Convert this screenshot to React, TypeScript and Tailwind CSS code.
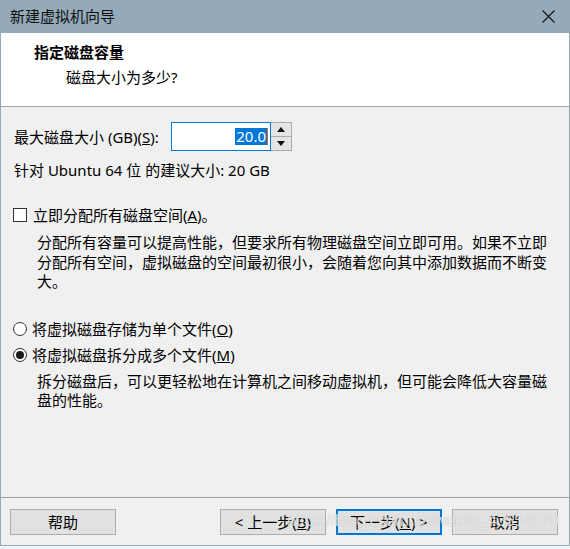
import React from 'react'

const font = "font-['Noto_Sans','Noto_Sans_CJK_SC',sans-serif]"

function Checkbox() {
  return <span className="block w-[14px] h-[14px] border border-[#333333] bg-white shrink-0" />
}

function Radio({ checked }: { checked?: boolean }) {
  return (
    <span className="flex items-center justify-center w-[14px] h-[14px] rounded-full border border-[#333333] bg-white shrink-0">
      {checked && <span className="block w-[8px] h-[8px] rounded-full bg-[#1a1a1a]" />}
    </span>
  )
}

function Button({ children, focused }: { children: React.ReactNode; focused?: boolean }) {
  return (
    <button
      className={
        'w-[106px] h-[26px] flex items-center justify-center bg-[#e1e1e1] text-[15px] leading-none text-black ' +
        (focused ? 'border-2 border-[#0078d7]' : 'border border-[#adadad]')
      }
    >
      {children}
    </button>
  )
}

export default function App() {
  return (
    <div className={`relative w-[570px] h-[549px] bg-[#f4f4f4] text-black ${font}`}>
      <div className="h-[546px] flex flex-col border-x border-b border-[#94aab8]">
        {/* Title bar */}
        <div className="h-[33px] -mx-px bg-[#94aab8] flex items-center justify-between pl-[10px] pr-[15px]">
          <span className="text-[15px] leading-none text-[#111]">新建虚拟机向导</span>
          <svg width="13" height="13" viewBox="0 0 13 13" className="text-[#111]">
            <path d="M0.5 0.5 L12.5 12.5 M12.5 0.5 L0.5 12.5" stroke="currentColor" strokeWidth="1.1" fill="none" />
          </svg>
        </div>

        {/* Header */}
        <div className="h-[74px] bg-white border-b border-[#a0a0a0] pl-[33px] pt-[9px]">
          <div className="text-[15px] leading-[20px] font-bold">指定磁盘容量</div>
          <div className="text-[15px] leading-[20px] mt-[5px] pl-[32px]">磁盘大小为多少?</div>
        </div>

        {/* Body */}
        <div className="flex-1 bg-[#f0f0f0] pt-[15px] text-[15px] leading-[20px]">
          <div className="flex items-center pl-[13px] h-[29px]">
            <span className="w-[157px]">
              最大磁盘大小 (GB)(<span className="underline">S</span>):
            </span>
            <div className="w-[100px] h-[29px] border border-[#0078d7] bg-white flex items-center justify-end pr-[2px]">
              <span className="bg-[#0078d7] text-white leading-[17px] px-px">20.0</span>
              <span className="block w-px h-[17px] bg-[#d46b08]" />
            </div>
            <div className="w-[21px] h-[29px] border border-l-0 border-[#acacac] bg-[#f0f0f0] flex flex-col">
              <div className="flex-1 flex items-center justify-center border-b border-[#acacac] bg-[#e5e5e5]">
                <svg width="8" height="5" viewBox="0 0 8 5"><path d="M4 0 L8 5 L0 5 Z" fill="#111" /></svg>
              </div>
              <div className="flex-1 flex items-center justify-center bg-[#e5e5e5]">
                <svg width="8" height="5" viewBox="0 0 8 5"><path d="M0 0 L8 0 L4 5 Z" fill="#111" /></svg>
              </div>
            </div>
          </div>

          <div className="pl-[13px] mt-[9px]">针对 Ubuntu 64 位 的建议大小: 20 GB</div>

          <div className="flex items-center gap-[6px] pl-[12px] mt-[25px]">
            <Checkbox />
            <span>
              立即分配所有磁盘空间(<span className="underline">A</span>)。
            </span>
          </div>
          <div className="pl-[36px] pr-[20px] mt-[8px] leading-[19.5px]">
            分配所有容量可以提高性能，但要求所有物理磁盘空间立即可用。如果不立即分配所有空间，虚拟磁盘的空间最初很小，会随着您向其中添加数据而不断变大。
          </div>

          <div className="flex items-center gap-[5px] pl-[12px] mt-[27px]">
            <Radio />
            <span>
              将虚拟磁盘存储为单个文件(<span className="underline">O</span>)
            </span>
          </div>
          <div className="flex items-center gap-[5px] pl-[12px] mt-[6px]">
            <Radio checked />
            <span>
              将虚拟磁盘拆分成多个文件(<span className="underline">M</span>)
            </span>
          </div>
          <div className="pl-[36px] pr-[20px] mt-[7px] leading-[19.5px]">
            拆分磁盘后，可以更轻松地在计算机之间移动虚拟机，但可能会降低大容量磁盘的性能。
          </div>
        </div>

        {/* Footer */}
        <div className="h-[48px] bg-[#f0f0f0] border-t border-[#a0a0a0] flex items-start pt-[11px] pl-[9px] pr-[11px]">
          <Button>帮助</Button>
          <div className="flex-1" />
          <div className="flex gap-[10px]">
            <Button>
              &lt; 上一步(<span className="underline">B</span>)
            </Button>
            <Button focused>
              下一步(<span className="underline">N</span>) &gt;
            </Button>
            <Button>取消</Button>
          </div>
        </div>
      </div>

      {/* CSDN watermark */}
      <div className="absolute left-[287px] top-[513px] font-['Liberation_Sans',sans-serif] text-[16px] leading-none text-white/70 [text-shadow:0_0_1px_rgba(120,120,120,0.5)]">
        https://blog.csdn.net/weixin_43514579
      </div>
    </div>
  )
}
